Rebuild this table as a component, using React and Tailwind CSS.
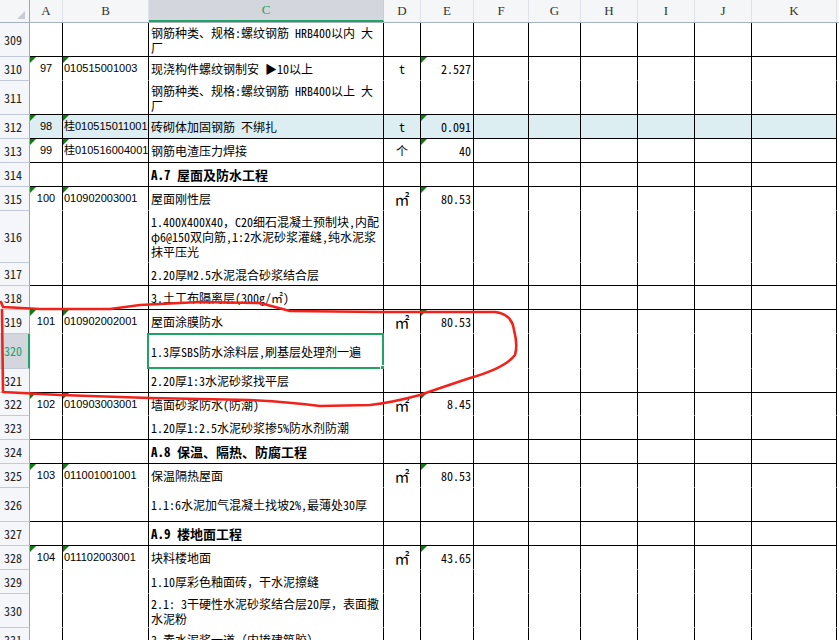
import React from 'react';

const cols = [
  { k: 'A', w: 'w-[33px]' },
  { k: 'B', w: 'w-[86px]' },
  { k: 'C', w: 'w-[235px]' },
  { k: 'D', w: 'w-[37px]' },
  { k: 'E', w: 'w-[53px]' },
  { k: 'F', w: 'w-[55px]' },
  { k: 'G', w: 'w-[52px]' },
  { k: 'H', w: 'w-[57px]' },
  { k: 'I', w: 'w-[57px]' },
  { k: 'J', w: 'w-[57px]' },
  { k: 'K', w: 'w-[85px]' },
];

const rows = [
  { n: 309, h: 'h-[34px]', c: ['钢筋种类、规格:螺纹钢筋 HRB400以内 大', '厂'], b: true },
  { n: 310, h: 'h-[24px]', a: '97', code: '010515001003', c: ['现浇构件螺纹钢制安 ▶10以上'], d: 't', e: '2.527', tri: true },
  { n: 311, h: 'h-[34px]', c: ['钢筋种类、规格:螺纹钢筋 HRB400以上 大', '厂'], b: true },
  { n: 312, h: 'h-[24px]', a: '98', code: '桂010515011001', c: ['砖砌体加固钢筋 不绑扎'], d: 't', e: '0.091', b: true, hl: true, tri: true },
  { n: 313, h: 'h-[24px]', a: '99', code: '桂010516004001', c: ['钢筋电渣压力焊接'], d: '个', e: '40', b: true, tri: true },
  { n: 314, h: 'h-[24px]', c: ['A.7 屋面及防水工程'], bold: true, b: true },
  { n: 315, h: 'h-[24px]', a: '100', code: '010902003001', c: ['屋面刚性层'], d: '㎡', e: '80.53', tri: true },
  { n: 316, h: 'h-[52px]', c: ['1.400X400X40，C20细石混凝土预制块,内配', 'φ6@150双向筋,1:2水泥砂浆灌缝,纯水泥浆', '抹平压光'] },
  { n: 317, h: 'h-[23px]', c: ['2.20厚M2.5水泥混合砂浆结合层'], b: true },
  { n: 318, h: 'h-[24px]', c: ['3.土工布隔离层(300g/㎡)'], b: true },
  { n: 319, h: 'h-[24px]', a: '101', code: '010902002001', c: ['屋面涂膜防水'], d: '㎡', e: '80.53', tri: true },
  { n: 320, h: 'h-[35px]', c: ['1.3厚SBS防水涂料层,刷基层处理剂一遍'], sel: true },
  { n: 321, h: 'h-[24px]', c: ['2.20厚1:3水泥砂浆找平层'], b: true },
  { n: 322, h: 'h-[23px]', a: '102', code: '010903003001', c: ['墙面砂浆防水(防潮)'], d: '㎡', e: '8.45', tri: true },
  { n: 323, h: 'h-[24px]', c: ['1.20厚1:2.5水泥砂浆掺5%防水剂防潮'], b: true },
  { n: 324, h: 'h-[24px]', c: ['A.8 保温、隔热、防腐工程'], bold: true, b: true },
  { n: 325, h: 'h-[24px]', a: '103', code: '011001001001', c: ['保温隔热屋面'], d: '㎡', e: '80.53', tri: true },
  { n: 326, h: 'h-[34px]', c: ['1.1:6水泥加气混凝土找坡2%,最薄处30厚'], b: true },
  { n: 327, h: 'h-[24px]', c: ['A.9 楼地面工程'], bold: true, b: true },
  { n: 328, h: 'h-[24px]', a: '104', code: '011102003001', c: ['块料楼地面'], d: '㎡', e: '43.65', tri: true },
  { n: 329, h: 'h-[24px]', c: ['1.10厚彩色釉面砖，干水泥擦缝'] },
  { n: 330, h: 'h-[34px]', c: ['2.1: 3干硬性水泥砂浆结合层20厚，表面撒', '水泥粉'] },
  { n: 331, h: 'h-[24px]', c: ['3.素水泥浆一道（内掺建筑胶）'] },
];

const mono = 'font-["Noto_Sans_Mono_CJK_SC","Noto_Sans_CJK_SC",monospace]';
const sans = 'font-["Liberation_Sans","Noto_Sans_CJK_SC",sans-serif]';

const Tri = () => (
  <span className="absolute left-0 top-0 w-0 h-0 border-t-[6px] border-r-[6px] border-t-[#107c10] border-r-transparent" />
);

const Row = ({ r }) => {
  const line = r.b ? 'border-b-black' : 'border-b-transparent';
  const bg = r.hl ? 'bg-[#ddeef3]' : 'bg-white';
  const cell = `relative shrink-0 h-full border-r border-b border-r-black ${line} ${bg} flex items-center`;
  return (
    <div className={`flex ${r.h}`}>
      <div
        className={`shrink-0 w-[30px] h-full border-b border-b-[#c2cad9] flex items-center pl-[4px] text-[12px] ${mono} ${
          r.sel
            ? 'bg-[#d3d6dd] text-[#21a366] border-r-2 border-r-[#21a366]'
            : 'bg-[#f4f6f9] text-[#222] border-r border-r-[#9aa6bf]'
        }`}
      >
        {r.n}
      </div>
      <div className={`${cell} w-[33px] justify-center text-[11px] text-black ${sans}`}>
        {r.tri && <Tri />}
        {r.a}
      </div>
      <div className={`${cell} w-[86px] pl-[1px] text-[11px] text-black whitespace-nowrap overflow-hidden ${sans}`}>
        {r.tri && <Tri />}
        {r.code}
      </div>
      <div className={`${cell} w-[235px] pl-[2px] text-black whitespace-nowrap ${mono} ${r.bold ? 'text-[13px] font-bold' : 'text-[12px]'}`}>
        <div className="leading-[15px]">
          {r.c.map((t, i) => (
            <div key={i}>{t}</div>
          ))}
        </div>
        {r.sel && (
          <div className="absolute -left-[2px] -top-[1px] w-[237px] h-[36px] border-2 border-[#21a366]">
            <span className="absolute -right-[4px] -bottom-[4px] w-[6px] h-[6px] bg-[#21a366] border border-white" />
          </div>
        )}
      </div>
      <div className={`${cell} w-[37px] justify-center text-black ${mono} ${r.d === '㎡' ? 'text-[15px] items-start pt-[1px]' : 'text-[12px]'}`}>{r.d}</div>
      <div className={`${cell} w-[53px] justify-end pr-[2px] text-[12px] text-black ${mono}`}>
        {r.tri && <Tri />}
        {r.e}
      </div>
      {cols.slice(5).map((c) => (
        <div key={c.k} className={`${cell} ${c.w}`} />
      ))}
    </div>
  );
};

export default function App() {
  return (
    <div className="relative w-[839px] h-[640px] overflow-hidden bg-white">
      <div className="flex h-[23px] bg-[#f5f6f8] border-b border-b-[#a5b0c5]">
        <div className="relative shrink-0 w-[30px] h-full border-r border-r-[#9aa6bf]">
          <span className="absolute right-[4px] bottom-[3px] w-0 h-0 border-b-[8px] border-l-[8px] border-b-[#c9ccd2] border-l-transparent" />
        </div>
        {cols.map((c) => (
          <div
            key={c.k}
            className={`shrink-0 ${c.w} h-full flex items-center justify-center border-r text-[13px] font-["Liberation_Serif",serif] ${
              c.k === 'C'
                ? 'bg-[#d3d6dd] text-[#21a366] border-r-[#c8ccd4] border-b-2 border-b-[#21a366]'
                : 'text-[#333] border-r-[#dde1e8]'
            }`}
          >
            {c.k}
          </div>
        ))}
      </div>
      {rows.map((r) => (
        <Row key={r.n} r={r} />
      ))}
      <svg className="absolute left-0 top-0 pointer-events-none" width="839" height="640">
        <path
          d="M 1 302 L 3 307 L 40 309 L 110 309 L 140 305 L 200 302 L 260 303 L 290 311 L 380 312 L 495 312 Q 512 314 514 330 Q 518 345 515 355 Q 505 368 470 378 Q 440 388 420 395 Q 390 403 370 405 L 320 406 Q 290 402 250 400 L 150 398 L 60 395 L 3 392 L 2 310"
          fill="none"
          stroke="#f2221b"
          strokeWidth="2.6"
          strokeLinejoin="round"
          strokeLinecap="round"
        />
      </svg>
    </div>
  );
}
